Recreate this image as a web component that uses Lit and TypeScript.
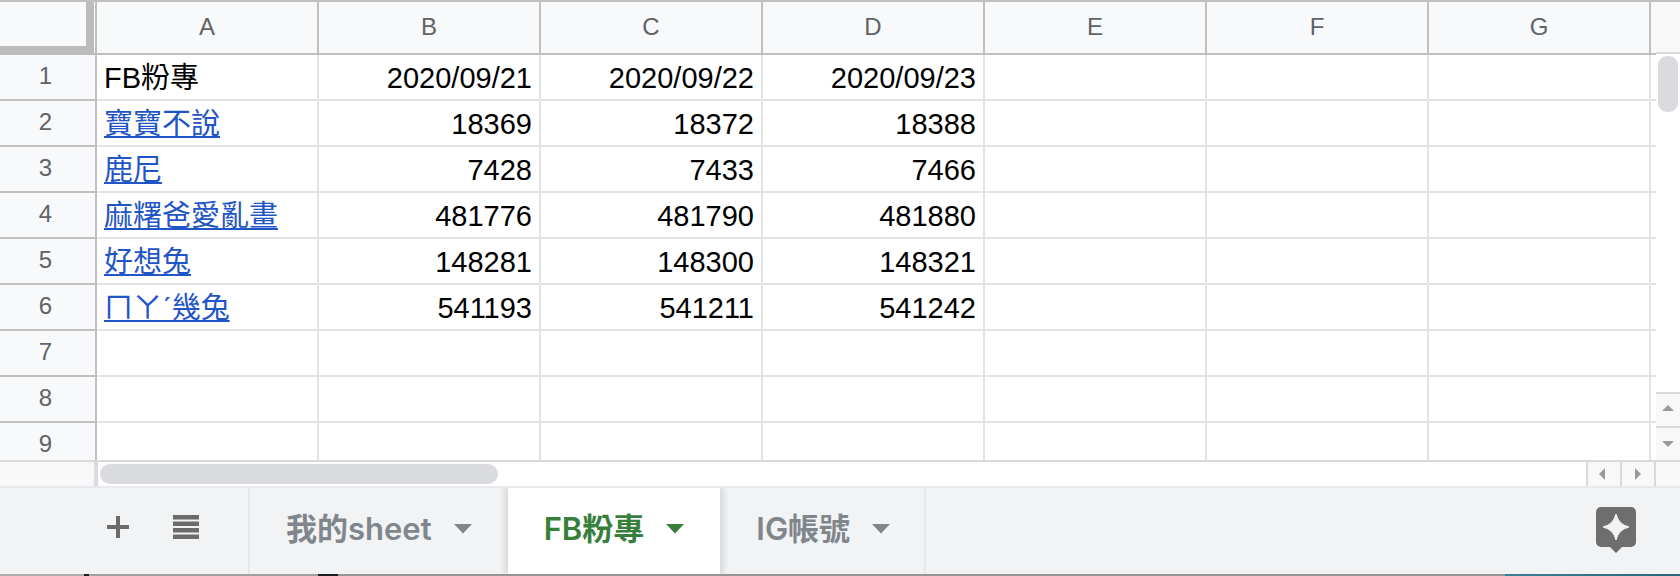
import { LitElement, html, css, svg } from "lit";
import { customElement, state } from "lit/decorators.js";
import { classMap } from "lit/directives/class-map.js";

const COLUMNS = ["A", "B", "C", "D", "E", "F", "G"];

const ROWS: string[][] = [
  ["FB粉專", "2020/09/21", "2020/09/22", "2020/09/23"],
  ["寶寶不說", "18369", "18372", "18388"],
  ["鹿尼", "7428", "7433", "7466"],
  ["麻糬爸愛亂畫", "481776", "481790", "481880"],
  ["好想兔", "148281", "148300", "148321"],
  ["ㄇㄚˊ幾兔", "541193", "541211", "541242"],
  [],
  [],
  [],
];

const arrow = (points: string) => html`
  <svg class="arrow" viewBox="0 0 12 12" aria-hidden="true">
    ${svg`<polygon points=${points} fill="currentColor" />`}
  </svg>
`;

@customElement("sheet-grid")
export class SheetGrid extends LitElement {
  static styles = css`
    :host {
      display: block;
      min-width: 0;
      overflow: hidden;
      background: #fff;
    }
    table {
      table-layout: fixed;
      width: 100%;
      border-collapse: separate;
      border-spacing: 0;
    }
    .index-col {
      width: 97px;
    }
    .data-col {
      width: 222px;
    }
    th,
    td {
      box-sizing: border-box;
      height: 46px;
      padding: 0 7px;
      overflow: hidden;
      white-space: nowrap;
    }
    th {
      border-right: 2px solid #c0c0c0;
      border-bottom: 2px solid #c0c0c0;
      background: #f8f9fa;
      color: #5f6368;
      font-size: 24px;
      line-height: 28px;
      font-weight: 400;
      text-align: center;
    }
    thead th {
      height: 53px;
      padding-bottom: 2px;
    }
    tbody th {
      padding: 0 8px 2px 4px;
    }
    thead .corner {
      padding: 0 1px 0 0;
      background: #fff;
      border-bottom-color: #bcbcbc;
    }
    .select-all {
      display: block;
      box-sizing: border-box;
      width: 100%;
      height: 51px;
      padding: 0;
      border: 0 solid #bcbcbc;
      border-width: 0 8px 7px 0;
      background: #f8f9fa;
    }
    td {
      padding-top: 2px;
      border-right: 2px solid #e2e3e3;
      border-bottom: 2px solid #e2e3e3;
      color: #000;
      font-size: 29px;
      line-height: 40px;
      text-align: right;
    }
    .name {
      text-align: left;
    }
    .rest {
      padding: 0;
      border-right: 0;
      background-clip: padding-box;
    }
    a {
      color: #1f55c6;
      text-decoration: underline;
      text-decoration-thickness: 2px;
      text-underline-offset: 2px;
      text-decoration-skip-ink: none;
    }
  `;

  render() {
    return html`
      <table>
        <colgroup>
          <col class="index-col" />
          ${COLUMNS.map(() => html`<col class="data-col" />`)}
          <col />
        </colgroup>
        <thead>
          <tr>
            <th class="corner"><button class="select-all" aria-label="全選"></button></th>
            ${COLUMNS.map((c) => html`<th scope="col">${c}</th>`)}
            <th class="rest"></th>
          </tr>
        </thead>
        <tbody>
          ${ROWS.map(
            (row, r) => html`<tr>
              <th scope="row">${r + 1}</th>
              ${COLUMNS.map((_, c) => {
                const text = row[c] ?? "";
                if (c > 0) return html`<td>${text}</td>`;
                return html`<td class="name">${r > 0 && text ? html`<a href="#">${text}</a>` : text}</td>`;
              })}
              <td class="rest"></td>
            </tr>`
          )}
        </tbody>
      </table>
    `;
  }
}

@customElement("sheet-tabs")
export class SheetTabs extends LitElement {
  @state() active = 1;

  static styles = css`
    :host {
      display: flex;
      align-items: stretch;
      height: 86px;
      border-top: 2px solid #e8e9ee;
      background: #f1f3f4;
    }
    button {
      margin: 0;
      padding: 0;
      border: 0;
      background: none;
      font: inherit;
      color: inherit;
    }
    .tools {
      display: flex;
      align-items: center;
      gap: 28px;
      box-sizing: border-box;
      width: 250px;
      padding: 0 0 8px 98px;
      border-right: 2px solid #e6e8eb;
      color: #6b6b6b;
    }
    .tools button,
    .explore {
      display: flex;
    }
    .icon {
      width: 40px;
      height: 40px;
    }
    .tab {
      display: flex;
      align-items: center;
      gap: 22px;
      box-sizing: border-box;
      padding: 0 34px 4px 36px;
      border-right: 2px solid #e6e8eb;
      color: #80868b;
      font-family: Inter, "Noto Sans CJK TC", sans-serif;
      font-size: 31px;
      line-height: 40px;
      font-weight: 600;
    }
    .tab.active {
      z-index: 1;
      border-right-color: transparent;
      background: #fff;
      color: #37803c;
      box-shadow: 0 0 8px 2px rgba(60, 64, 67, 0.2);
      clip-path: inset(0 -12px 0 -12px);
    }
    .tab.before {
      border-right-color: transparent;
    }
    .caret {
      width: 18px;
      height: 10px;
    }
    .explore {
      align-items: center;
      margin-left: auto;
      padding: 0 44px 2px 0;
    }
    .spark {
      width: 40px;
      height: 46px;
    }
  `;

  render() {
    return html`
      <div class="tools">
        <button aria-label="新增工作表">
          <svg class="icon" viewBox="0 0 40 40">
            <path d="M18 9h4v9h9v4h-9v9h-4v-9H9v-4h9z" fill="currentColor" />
          </svg>
        </button>
        <button aria-label="所有工作表">
          <svg class="icon" viewBox="0 0 40 40">
            <path d="M7 8h26v4.500H7zM7 14.500h26V19H7zM7 21h26v4.500H7zM7 27.500h26V32H7z" fill="currentColor" />
          </svg>
        </button>
      </div>
      ${["我的sheet", "FB粉專", "IG帳號"].map(
        (name, i) => html`<button
          class=${classMap({ tab: true, active: i === this.active, before: i === this.active - 1 })}
          @click=${() => (this.active = i)}
        >
          <span>${name}</span>
          <svg class="caret" viewBox="0 0 18 10" aria-hidden="true"><path d="M0 0h18l-9 9.500z" fill="currentColor" /></svg>
        </button>`
      )}
      <button class="explore" aria-label="探索">
        <svg class="spark" viewBox="0 0 40 46">
          <path d="M5 0h30a5 5 0 0 1 5 5v30a5 5 0 0 1-5 5h-9l-6 6-6-6H5a5 5 0 0 1-5-5V5a5 5 0 0 1 5-5z" fill="#6e6e6e" />
          <path d="M20 7Q22.500 17.500 33 20Q22.500 22.500 20 33Q17.500 22.500 7 20Q17.500 17.500 20 7z" fill="#f1f3f4" stroke="#f1f3f4" stroke-width="1" />
        </svg>
      </button>
    `;
  }
}

@customElement("app-root")
export class AppRoot extends LitElement {
  static styles = css`
    :host {
      display: block;
      overflow: hidden;
      border-top: 2px solid #c0c0c0;
      background: #fff;
      font-family: "Liberation Sans", "Noto Sans CJK TC", sans-serif;
    }
    .sheet {
      display: grid;
      grid-template-columns: minmax(0, 1fr) 24px;
      height: 458px;
    }
    .vbar {
      display: flex;
      flex-direction: column;
    }
    .cap {
      height: 50px;
      border-bottom: 2px solid #d9d9d9;
      background: #f8f8f8;
    }
    .vtrack {
      flex: 1;
      padding: 2px;
    }
    .vthumb {
      height: 56px;
      border-radius: 9px;
      background: #dadbdf;
    }
    .step {
      display: flex;
      align-items: center;
      justify-content: center;
      box-sizing: border-box;
      margin: 0;
      padding: 0;
      border: 0 solid #d9d9d9;
      background: #f8f8f8;
      color: #999;
    }
    .vbar .step {
      height: 34px;
      border-top-width: 2px;
    }
    .arrow {
      width: 12px;
      height: 12px;
    }
    .hbar {
      display: flex;
      height: 24px;
      border-top: 2px solid #d9d9d9;
    }
    .left-cap {
      box-sizing: border-box;
      width: 98px;
      border-right: 4px solid #dadbdf;
      background: #f8f8f8;
    }
    .htrack {
      flex: 1;
      padding: 2px;
    }
    .hthumb {
      width: 398px;
      height: 20px;
      border-radius: 10px;
      background: #dadbdf;
    }
    .hbar .step {
      width: 34px;
      border-left-width: 2px;
    }
    .hbar .end {
      width: 26px;
    }
    .desktop {
      height: 2px;
      background: linear-gradient(
        90deg,
        #b0b0ae 0 5%,
        #1c1f20 5% 5.3%,
        #a0a09e 5.3% 18.9%,
        #1c1f20 18.9% 20.1%,
        #969594 20.1% 89.6%,
        #3b7f97 89.6%,
        #2d6678
      );
    }
  `;

  render() {
    return html`
      <div class="sheet">
        <sheet-grid></sheet-grid>
        <div class="vbar">
          <div class="cap"></div>
          <div class="vtrack"><div class="vthumb"></div></div>
          <button class="step" aria-label="向上捲動">${arrow("0,7 6,1 12,7")}</button>
          <button class="step" aria-label="向下捲動">${arrow("0,3 12,3 6,9")}</button>
        </div>
      </div>
      <div class="hbar">
        <div class="left-cap"></div>
        <div class="htrack"><div class="hthumb"></div></div>
        <button class="step" aria-label="向左捲動">${arrow("7,0 7,12 1,6")}</button>
        <button class="step" aria-label="向右捲動">${arrow("3,0 9,6 3,12")}</button>
        <div class="step end"></div>
      </div>
      <sheet-tabs></sheet-tabs>
      <div class="desktop"></div>
    `;
  }
}
